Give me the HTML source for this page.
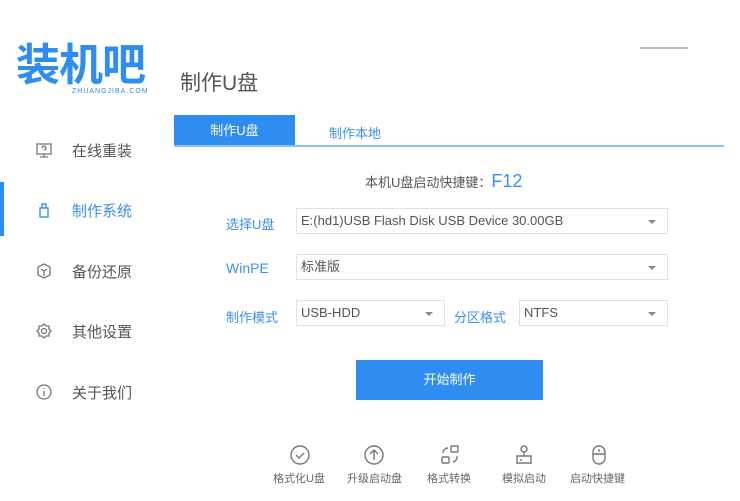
<!DOCTYPE html>
<html><head><meta charset="utf-8"><style>
body{margin:0;width:740px;height:501px;background:#fff;position:relative;overflow:hidden;font-family:"Liberation Sans","Noto Sans CJK SC",sans-serif;color:#555}
.a{position:absolute}
.logo{left:16px;top:34px;font-size:44px;color:#2f8cf0;font-weight:bold;letter-spacing:-1px;font-family:"Noto Sans CJK SC",sans-serif;line-height:54px}
.sub{left:72px;top:88px;font-size:7px;color:#2f8cf0;letter-spacing:1px}
.nav{left:72px;font-size:15px;color:#555}
.ic{left:35px;width:18px;height:18px}
.box{border:1px solid #e2e2e2;height:26px;box-sizing:border-box;font-size:13px;line-height:24px;padding-left:4px;color:#555}
.box:after{content:"";position:absolute;right:11px;top:11px;border:4px solid transparent;border-top:4px solid #888}
.lab{font-size:13px;color:#3b8ff2}
.bi{top:444px;width:22px;height:22px}
.bl{top:470px;font-size:11px;color:#666}
</style></head><body>
<div class="a logo">装机吧</div>
<div class="a sub">ZHUANGJIBA.COM</div>
<div class="a" style="left:640px;top:47px;width:48px;height:2px;background:#bbb"></div>
<div class="a" style="left:0;top:182px;width:4px;height:54px;background:#2f8cf0"></div>
<svg class="a ic" style="top:141px" viewBox="0 0 18 18" fill="none" stroke="#777" stroke-width="1.3"><rect x="2" y="3" width="14" height="10"/><path d="M9 13v3M5 16h8M7 7a2 2 0 1 1 2 2"/></svg>
<div class="a nav" style="top:140px">在线重装</div>
<svg class="a ic" style="top:201px" viewBox="0 0 18 18" fill="none" stroke="#3b8ff2" stroke-width="1.4"><rect x="5" y="7" width="8" height="9"/><path d="M7 7V3h4v4"/></svg>
<div class="a nav" style="top:200px;color:#3b8ff2">制作系统</div>
<svg class="a ic" style="top:262px" viewBox="0 0 18 18" fill="none" stroke="#777" stroke-width="1.3"><path d="M9 2l6 3v8l-6 3-6-3V5zM6 7l3 2 3-2M9 9v5"/></svg>
<div class="a nav" style="top:261px">备份还原</div>
<svg class="a ic" style="top:322px" viewBox="0 0 18 18" fill="none" stroke="#777" stroke-width="1.3"><path d="M9 2l2 2 3 0 0 3 2 2-2 2 0 3-3 0-2 2-2-2-3 0 0-3-2-2 2-2 0-3 3 0z"/><circle cx="9" cy="9" r="2.5"/></svg>
<div class="a nav" style="top:321px">其他设置</div>
<svg class="a ic" style="top:383px" viewBox="0 0 18 18" fill="none" stroke="#777" stroke-width="1.3"><circle cx="9" cy="9" r="7"/><path d="M9 8v5M9 5v1"/></svg>
<div class="a nav" style="top:382px">关于我们</div>

<div class="a" style="left:180px;top:67px;font-size:21px;color:#555">制作U盘</div>
<div class="a" style="left:174px;top:115px;width:121px;height:32px;background:#2f8cf0;color:#fff;font-size:13px;text-align:center;line-height:32px">制作U盘</div>
<div class="a" style="left:329px;top:123px;font-size:13px;color:#3b8ff2">制作本地</div>
<div class="a" style="left:174px;top:145px;width:550px;height:2px;background:#8cc0f6"></div>
<div class="a" style="left:365px;top:171px;font-size:13px;color:#555">本机U盘启动快捷键：<span style="color:#3b8ff2;font-size:18px">F12</span></div>

<div class="a lab" style="left:226px;top:214px">选择U盘</div>
<div class="a box" style="left:296px;top:208px;width:372px">E:(hd1)USB Flash Disk USB Device 30.00GB</div>
<div class="a lab" style="left:226px;top:260px;font-size:14px">WinPE</div>
<div class="a box" style="left:296px;top:254px;width:372px">标准版</div>
<div class="a lab" style="left:226px;top:307px">制作模式</div>
<div class="a box" style="left:296px;top:300px;width:149px">USB-HDD</div>
<div class="a lab" style="left:454px;top:307px">分区格式</div>
<div class="a box" style="left:519px;top:300px;width:149px">NTFS</div>

<div class="a" style="left:356px;top:360px;width:187px;height:40px;background:#2f8cf0;color:#fff;font-size:13px;text-align:center;line-height:40px">开始制作</div>

<svg class="a bi" style="left:289px" viewBox="0 0 22 22" fill="none" stroke="#777" stroke-width="1.4"><circle cx="11" cy="11" r="9"/><path d="M7 11l3 3 5-5"/></svg>
<div class="a bl" style="left:273px">格式化U盘</div>
<svg class="a bi" style="left:363px" viewBox="0 0 22 22" fill="none" stroke="#777" stroke-width="1.4"><circle cx="11" cy="11" r="9"/><path d="M11 16V6M7 10l4-4 4 4"/></svg>
<div class="a bl" style="left:347px">升级启动盘</div>
<svg class="a bi" style="left:439px" viewBox="0 0 22 22" fill="none" stroke="#777" stroke-width="1.4"><rect x="12" y="2" width="7" height="6" rx="1"/><rect x="3" y="13" width="7" height="6" rx="1"/><path d="M4 9a5 5 0 0 1 5-5M18 12a5 5 0 0 1-4 6"/></svg>
<div class="a bl" style="left:427px">格式转换</div>
<svg class="a bi" style="left:513px" viewBox="0 0 22 22" fill="none" stroke="#777" stroke-width="1.4"><circle cx="11" cy="5" r="3"/><path d="M11 8v4M4 12h14v7H4zM7 16h2"/></svg>
<div class="a bl" style="left:502px">模拟启动</div>
<svg class="a bi" style="left:588px" viewBox="0 0 22 22" fill="none" stroke="#777" stroke-width="1.4"><rect x="5" y="2" width="12" height="18" rx="6"/><path d="M5 10h12M11 5v3"/></svg>
<div class="a bl" style="left:570px">启动快捷键</div>
</body></html>
